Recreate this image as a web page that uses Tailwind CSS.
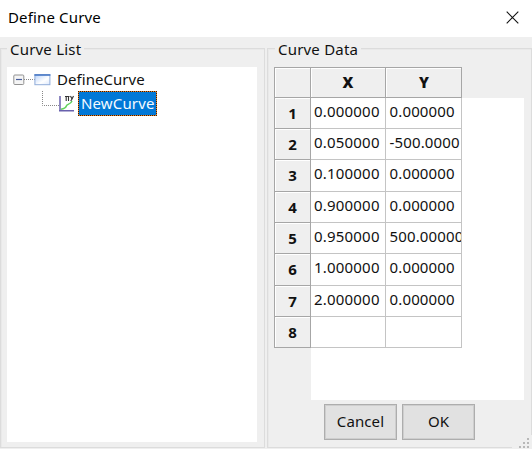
<!DOCTYPE html>
<html lang="en">
<head>
<meta charset="utf-8">
<title>Define Curve</title>
<script src="https://cdn.jsdelivr.net/npm/@tailwindcss/browser@4"></script>
</head>
<body class="w-[532px] h-[449px] overflow-hidden bg-[#efefef] font-['Noto_Sans','Open_Sans',sans-serif] text-[15px] leading-5 text-[#111] flex flex-col">
<header class="h-[37px] shrink-0 bg-white flex items-center justify-between pl-2 pr-[13px]">
  <h1 class="text-[15px] tracking-[0.15px] text-black -mt-1">Define Curve</h1>
  <svg class="-mt-[2px]" width="13" height="13" viewBox="0 0 13 13" fill="none" stroke="#111" stroke-width="1.1"><path d="M.7.7l11.6 11.6M12.3.7L.7 12.3"/></svg>
</header>
<main class="flex gap-[2px] pt-[11px] h-[411px]">
  <section class="w-[265px] h-[400px] border border-[#dcdcdc] shadow-[inset_1px_1px_0_#e9e9e9] pl-1.5">
    <h2 class="w-fit h-[18px] -mt-[9px] px-[3px] bg-[#efefef] leading-[18px] tracking-[0.2px]">Curve List</h2>
    <div class="w-[250px] h-[375px] mt-[9px] bg-white pt-[2px] pl-1.5">
      <div class="h-[21px] flex items-center">
        <svg width="24" height="21" viewBox="0 0 24 21" fill="none"><path d="M11 10.5h11" stroke="#888" stroke-dasharray="1 1"/><rect x=".8" y="6" width="10" height="9.5" rx="1" fill="#f5f5f5" stroke="#929292"/><path d="M3 10.5h6" stroke="#465c9c" stroke-width="1.2"/></svg>
        <svg class="-ml-[3px]" width="17" height="21" viewBox="0 0 17 21"><defs><linearGradient id="windowFill" x1="0" y1="0" x2="1" y2="1"><stop stop-color="#b8d2fa"/><stop offset=".6" stop-color="#fff"/><stop offset="1" stop-color="#dce8fc"/></linearGradient></defs><rect x=".9" y="5.7" width="15" height="10" fill="url(#windowFill)" stroke="#91add9"/><path d="M.4 6h16" stroke="#4a7ac6" stroke-width="1.6"/></svg>
        <span class="ml-[6px] tracking-[0.05px] -mt-[2px]">DefineCurve</span>
      </div>
      <div class="h-[27px] flex items-center pl-[29px]">
        <svg class="shrink-0" width="34" height="27" viewBox="0 0 34 27" fill="none"><path d="M.5 1v14.5H17" stroke="#888" stroke-dasharray="1 1"/><path d="M18 6v15.5M17 20.8h15" stroke="#6961ad" stroke-width="1.5"/><path d="M19 19.3c4-.8 5-2 5.5-3.6s4-1 5.5-4.7" stroke="#62d25b" stroke-width="1.5"/><path d="M23 6.5h4.5M24.2 7v4M26.5 7v4M28.500 6l1.500 3 1.500-3M30 9l-1.300 2" stroke="#333" stroke-width="1.100"/></svg>
        <span class="ml-[2px] w-[79px] h-[25px] p-px bg-[repeating-conic-gradient(#f08020_0_25%,#302010_0_50%)] bg-size-[2px_2px]"><span class="block h-[23px] bg-[#0078d7] text-[#f4faff] leading-[23px] pl-[2px] tracking-[0.15px]">NewCurve</span></span>
      </div>
    </div>
  </section>
  <section class="w-[265px] h-[400px] border border-[#dcdcdc] shadow-[inset_1px_1px_0_#e9e9e9] pl-1.5">
    <h2 class="w-fit h-[18px] -mt-[9px] ml-[1px] px-[3px] bg-[#efefef] leading-[18px] tracking-[0.2px]">Curve Data</h2>
    <div class="mt-[9px] w-[250px] h-[333px] bg-[linear-gradient(to_right,#efefef_37px,white_37px)]">
      <div class="bg-[#efefef]">
        <div class="w-[188px] h-[31px] grid grid-cols-[36px_75px_76px] grid-rows-[30px] border-l border-t border-[#a6a6a6] text-center font-bold leading-[29px]">
          <b class="border-r border-b border-[#a6a6a6] shadow-[inset_1px_1px_0_white]"></b><b class="border-r border-b border-[#a6a6a6] shadow-[inset_1px_1px_0_white]">X</b><b class="border-r border-b border-[#a6a6a6] shadow-[inset_1px_1px_0_white] pl-px">Y</b>
        </div>
      </div>
      <div id="rows" class="w-[188px] border-l border-[#a6a6a6]"></div>
    </div>
    <div class="flex gap-[5px] pl-[50px] mt-[4px]">
      <button class="w-[73px] h-[36px] border border-[#adadad] shadow-[inset_0_0_0_1px_#cecece] bg-[#e1e1e1] pb-0.5 tracking-[0.1px]">Cancel</button>
      <button class="w-[73px] h-[36px] border border-[#adadad] shadow-[inset_0_0_0_1px_#cecece] bg-[#e1e1e1] pb-0.5 tracking-[0.1px]">OK</button>
    </div>
  </section>
</main>
<svg class="absolute right-0 bottom-0" width="20" height="14" viewBox="0 0 20 14"><path fill="#efefef" d="M0 0h20v14H0z"/><path fill="#b8b8b8" d="M15 3h2v2h-2zM11 7h2v2h-2zM15 7h2v2h-2zM7 11h2v2H7zM11 11h2v2h-2zM15 11h2v2h-2z"/></svg>
<script>
const rows = [
  [31, '0.000000', '0.000000'], [31, '0.050000', '-500.0000'],
  [32, '0.100000', '0.000000'], [31, '0.900000', '0.000000'],
  [31, '0.950000', '500.00000'], [32, '1.000000', '0.000000'],
  [31, '2.000000', '0.000000'], [31, '', '']
];
document.getElementById('rows').innerHTML = rows.map(([h, x, y], i) => `
  <div class="grid grid-cols-[36px_75px_76px] grid-rows-[100%]" style="height:${h}px">
    <b class="bg-[#efefef] border-r border-b border-[#a6a6a6] shadow-[inset_1px_1px_0_white] text-center leading-[31px]">${i + 1}</b>
    <span class="bg-white border-r border-b border-[#c4c4c4] pl-[3px] leading-[26px] tracking-[0.2px] overflow-hidden whitespace-nowrap">${x}</span>
    <span class="bg-white border-r border-b border-[#c4c4c4] pl-[3.5px] leading-[26px] tracking-[0.15px] overflow-hidden whitespace-nowrap">${y}</span>
  </div>`).join('');
</script>
</body>
</html>
